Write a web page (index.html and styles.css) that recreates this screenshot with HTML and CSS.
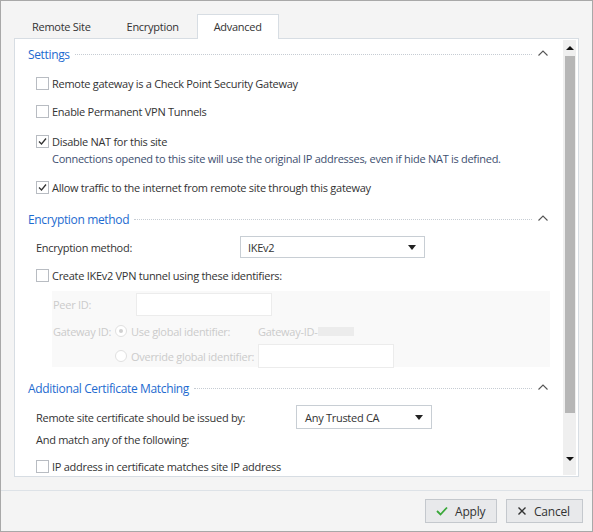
FILE: index.html
```html
<!DOCTYPE html>
<html>
<head>
<meta charset="utf-8">
<link rel="stylesheet" href="styles.css">
</head>
<body>
<div class="window">
  <div class="tabs">
    <div class="tab">Remote Site</div>
    <div class="tab">Encryption</div>
    <div class="tab active">Advanced</div>
  </div>
  <div class="panel">
    <div class="content">
      <div class="section-head first">
        <span class="title">Settings</span><span class="dots"></span>
        <svg class="chev" width="10" height="6" viewBox="0 0 10 6"><path d="M0.5 5.5 L5 1 L9.5 5.5" fill="none" stroke="#555" stroke-width="1.1"/></svg>
      </div>
      <div class="check row r1"><span class="box"></span><span>Remote gateway is a Check Point Security Gateway</span></div>
      <div class="check row"><span class="box"></span><span>Enable Permanent VPN Tunnels</span></div>
      <div class="check row short"><span class="box"><svg width="11" height="11" viewBox="0 0 11 11"><path d="M2 5.5 L4.5 8 L9 2.5" fill="none" stroke="#333" stroke-width="1.3"/></svg></span><span>Disable NAT for this site</span></div>
      <div class="desc">Connections opened to this site will use the original IP addresses, even if hide NAT is defined.</div>
      <div class="check row r4"><span class="box"><svg width="11" height="11" viewBox="0 0 11 11"><path d="M2 5.5 L4.5 8 L9 2.5" fill="none" stroke="#333" stroke-width="1.3"/></svg></span><span>Allow traffic to the internet from remote site through this gateway</span></div>

      <div class="section-head s2">
        <span class="title">Encryption method</span><span class="dots"></span>
        <svg class="chev" width="10" height="6" viewBox="0 0 10 6"><path d="M0.5 5.5 L5 1 L9.5 5.5" fill="none" stroke="#555" stroke-width="1.1"/></svg>
      </div>
      <div class="field row f1">
        <span class="label">Encryption method:</span>
        <div class="select sel-enc"><span>IKEv2</span><span class="caret"></span></div>
      </div>
      <div class="check row"><span class="box"></span><span>Create IKEv2 VPN tunnel using these identifiers:</span></div>
      <div class="idbox">
        <div class="idrow peer"><span class="idlabel">Peer ID:</span><div class="input in-peer"></div></div>
        <div class="idrow gw">
          <span class="gwlabel">Gateway ID:</span>
          <span class="radio on"></span><span class="rtext">Use global identifier:</span>
          <span class="gwval">Gateway-ID-<span class="blur"></span></span>
        </div>
        <div class="idrow ov">
          <span class="radio"></span><span class="rtext">Override global identifier:</span>
          <div class="input in-ov"></div>
        </div>
      </div>

      <div class="section-head s3">
        <span class="title">Additional Certificate Matching</span><span class="dots"></span>
        <svg class="chev" width="10" height="6" viewBox="0 0 10 6"><path d="M0.5 5.5 L5 1 L9.5 5.5" fill="none" stroke="#555" stroke-width="1.1"/></svg>
      </div>
      <div class="field row f2">
        <span class="label wide">Remote site certificate should be issued by:</span>
        <div class="select sel-ca"><span>Any Trusted CA</span><span class="caret"></span></div>
      </div>
      <div class="plain">And match any of the following:</div>
      <div class="check row r-ip"><span class="box"></span><span>IP address in certificate matches site IP address</span></div>
    </div>
    <div class="scrollbar">
      <div class="sb-btn"><span class="tri-up"></span></div>
      <div class="thumb"></div>
      <div class="track"><span class="tri-down"></span></div>
    </div>
  </div>
  <div class="footer">
    <button class="btn apply"><svg width="12" height="10" viewBox="0 0 12 10"><path d="M1 5 L4.5 8.5 L11 1.5" fill="none" stroke="#3aa83a" stroke-width="1.8"/></svg><span>Apply</span></button>
    <button class="btn cancel"><svg width="10" height="10" viewBox="0 0 10 10"><path d="M1.5 1.5 L8.5 8.5 M8.5 1.5 L1.5 8.5" fill="none" stroke="#333" stroke-width="1.4"/></svg><span>Cancel</span></button>
  </div>
</div>
</body>
</html>
```

FILE: styles.css
```css
* { box-sizing: border-box; }
html, body { margin: 0; padding: 0; }
body {
  font-family: "Open Sans", "Noto Sans", "Liberation Sans", sans-serif;
  font-size: 11px;
  letter-spacing: -0.28px;
  color: #333;
  background: #fff;
  white-space: nowrap;
}
.window {
  width: 593px;
  height: 532px;
  border: 1px solid #a8a8a8;
  background: #f4f4f4;
  display: flex;
  flex-direction: column;
}
.tabs {
  display: flex;
  margin-top: 13px;
  padding-left: 13px;
  height: 24px;
  position: relative;
  z-index: 1;
}
.tab {
  padding: 0 17px;
  line-height: 23px;
  color: #333;
  border: 1px solid transparent;
  border-bottom: none;
}
.tab.active {
  background: #fff;
  border-color: #d7dde3;
  height: 25px;
  padding: 0 16px 0 16px;
}
.panel {
  margin: 0 13px 13px 13px;
  height: 439px;
  border: 1px solid #d7dde3;
  background: #fff;
  display: flex;
  flex: none;
}
.content {
  flex: 1;
  overflow: hidden;
  padding: 6px 15px 0 13px;
}
.section-head {
  display: flex;
  align-items: center;
  height: 18px;
}
.section-head .title {
  color: #1e6bd0;
  font-size: 12px;
  letter-spacing: -0.35px;
}
.section-head .dots {
  flex: 1;
  border-top: 1px dotted #c6ccd3;
  margin: 1px 4px 0 5px;
}
.section-head .chev { margin-left: 2px; margin-top: -2px; }
.s2 { margin-top: 9px; }
.s3 { margin-top: 12px; }
.row {
  display: flex;
  align-items: center;
  height: 28px;
}
.check { padding-left: 8px; }
.r1 { margin-top: 6px; }
.short { height: 20px; margin-top: 6px; }
.r4 { margin-top: 6px; }
.box {
  width: 13px;
  height: 13px;
  border: 1px solid #b8bcc2;
  background: #fff;
  margin-right: 3px;
  display: flex;
  align-items: center;
  justify-content: center;
  flex: none;
}
.desc {
  padding-left: 24px;
  height: 16px;
  line-height: 16px;
  color: #3e4f6f;
}
.field { padding-left: 8px; margin-top: 5px; }
.label { width: 204px; flex: none; }
.label.wide { width: 260px; }
.select {
  height: 22px;
  border: 1px solid #c8ced4;
  background: #fff;
  display: flex;
  align-items: center;
  justify-content: space-between;
  padding: 0 8px 0 7px;
}
.sel-enc { width: 185px; }
.sel-ca { width: 136px; height: 24px; padding-left: 8px; }
.caret {
  width: 0; height: 0;
  border-left: 4px solid transparent;
  border-right: 4px solid transparent;
  border-top: 5px solid #222;
  margin-top: 1px;
}
.idbox {
  margin: 2px -2px 0 24px;
  height: 76px;
  background: #f9f9f9;
  color: #cbcbcb;
}
.idrow { display: flex; align-items: center; }
.peer { height: 25px; padding-top: 1px; }
.idlabel { width: 84px; padding-left: 1px; }
.input {
  background: #fff;
  border: 1px solid #ececec;
  height: 23px;
}
.in-peer { width: 136px; }
.gw { height: 26px; padding-left: 1px; margin-top: 2px; }
.gwlabel { width: 62px; }
.radio {
  width: 12px; height: 12px;
  border: 1px solid #e0e0e0;
  border-radius: 50%;
  background: #fff;
  flex: none;
  position: relative;
  margin-right: 4px;
}
.radio.on::after {
  content: "";
  position: absolute;
  left: 3px; top: 3px;
  width: 4px; height: 4px;
  border-radius: 50%;
  background: #d0d0d0;
}
.rtext { width: 127px; flex: none; }
.gwval { display: flex; align-items: center; }
.blur {
  display: inline-block;
  width: 36px;
  height: 9px;
  background: #ececec;
  margin-left: 1px;
}
.ov { padding-left: 63px; height: 24px; }
.ov .rtext { width: 127px; }
.in-ov { width: 136px; height: 24px; }
.f2 { margin-top: 6px; }
.plain { padding-left: 8px; height: 18px; line-height: 18px; }
.r-ip { margin-top: 3px; }
.scrollbar {
  width: 13px;
  margin: 1px 2px 1px 0;
  background: #efefef;
  display: flex;
  flex-direction: column;
  flex: none;
}
.sb-btn {
  height: 16px;
  display: flex;
  align-items: center;
  justify-content: center;
}
.tri-up {
  width: 0; height: 0;
  border-left: 4px solid transparent;
  border-right: 4px solid transparent;
  border-bottom: 4px solid #111;
}
.thumb {
  height: 357px;
  background: #b6b6b6;
  margin: 0 1px 0 2px;
}
.track {
  flex: 1;
  display: flex;
  align-items: flex-end;
  justify-content: center;
  padding-bottom: 14px;
}
.tri-down {
  width: 0; height: 0;
  border-left: 4px solid transparent;
  border-right: 4px solid transparent;
  border-top: 4px solid #111;
}
.footer {
  flex: 1;
  border-top: 1px solid #dde2e7;
  display: flex;
  justify-content: flex-end;
  align-items: flex-start;
  padding: 8px 9px 0 0;
  gap: 9px;
}
.btn {
  height: 24px;
  border: 1px solid #c4c8cd;
  background: #e8e9eb;
  font-family: inherit;
  font-size: 12px;
  letter-spacing: -0.2px;
  color: #333;
  display: flex;
  align-items: center;
  gap: 7px;
  padding: 0 0 0 10px;
}
.apply { width: 72px; }
.cancel { width: 77px; }
```
